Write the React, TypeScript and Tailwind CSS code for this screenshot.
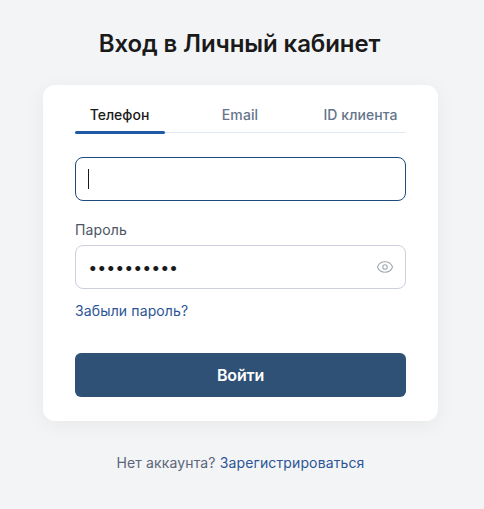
import { Eye } from "lucide-react";

const TABS = [
  { label: "Телефон", active: true, width: "w-[90px] pr-[1px]" },
  { label: "Email", active: false, width: "w-[150px]" },
  { label: "ID клиента", active: false, width: "w-[91px]" },
];

export default function App() {
  return (
    <div className="flex h-[509px] w-[484px] flex-col items-center overflow-hidden bg-[#f3f4f6] pr-[3px] font-['Inter',sans-serif] tracking-[0.13px]">
      <h1 className="mr-[2px] mt-[28px] h-[32px] text-[24px] font-semibold leading-[32px] tracking-[-0.1px] text-[#1a1a1a]">
        Вход в Личный кабинет
      </h1>

      <div className="mt-[25px] h-[336px] w-[395px] rounded-[12px] bg-white px-[32px] pt-[16px] shadow-[0_4px_20px_rgba(0,0,0,0.05)]">
        <div className="flex h-[32px] border-b border-[#e2e8f0]">
          {TABS.map((tab) => (
            <div
              key={tab.label}
              className={`relative h-[32px] text-center text-[14px] font-medium leading-[28px] ${tab.width} ${
                tab.active ? "tracking-normal text-[#1a1a1a]" : "tracking-[0.08px] text-[#64748b]"
              }`}
            >
              {tab.label}
              {tab.active && (
                <span className="absolute bottom-[-1px] left-0 h-[3px] w-full rounded-[2px] bg-[#1e5aa8]" />
              )}
            </div>
          ))}
        </div>

        <div className="mt-[24px] flex h-[44px] items-center rounded-[8px] border border-[#1e4a7c] pl-[12px]">
          <span className="h-[20px] w-px bg-[#1a1a1a]" />
        </div>

        <div className="mt-[19px] h-[20px] text-[14px] leading-[20px] text-[#4b5563]">Пароль</div>
        <div className="mt-[5px] flex h-[44px] items-center justify-between rounded-[8px] border border-[#cbd0dc] pl-[13px] pr-[11px]">
          <span className="text-[16px] font-bold leading-[20px] tracking-[1.4px] text-[#1a1a1a]">
            ••••••••••
          </span>
          <Eye size={18} strokeWidth={1.5} className="text-[#a3a9b3]" />
        </div>

        <div className="mt-[12px] h-[20px] text-[14px] leading-[20px] text-[#2c5595]">Забыли пароль?</div>

        <button
          type="button"
          className="mt-[32px] block h-[44px] w-full rounded-[6px] bg-[#2f5175] text-center text-[16px] font-semibold tracking-[-0.15px] text-white"
        >
          Войти
        </button>
      </div>

      <p className="mt-[32px] text-[14px] leading-[20px] text-[#5b6478]">
        Нет аккаунта? <span className="text-[#2c5595]">Зарегистрироваться</span>
      </p>
    </div>
  );
}
